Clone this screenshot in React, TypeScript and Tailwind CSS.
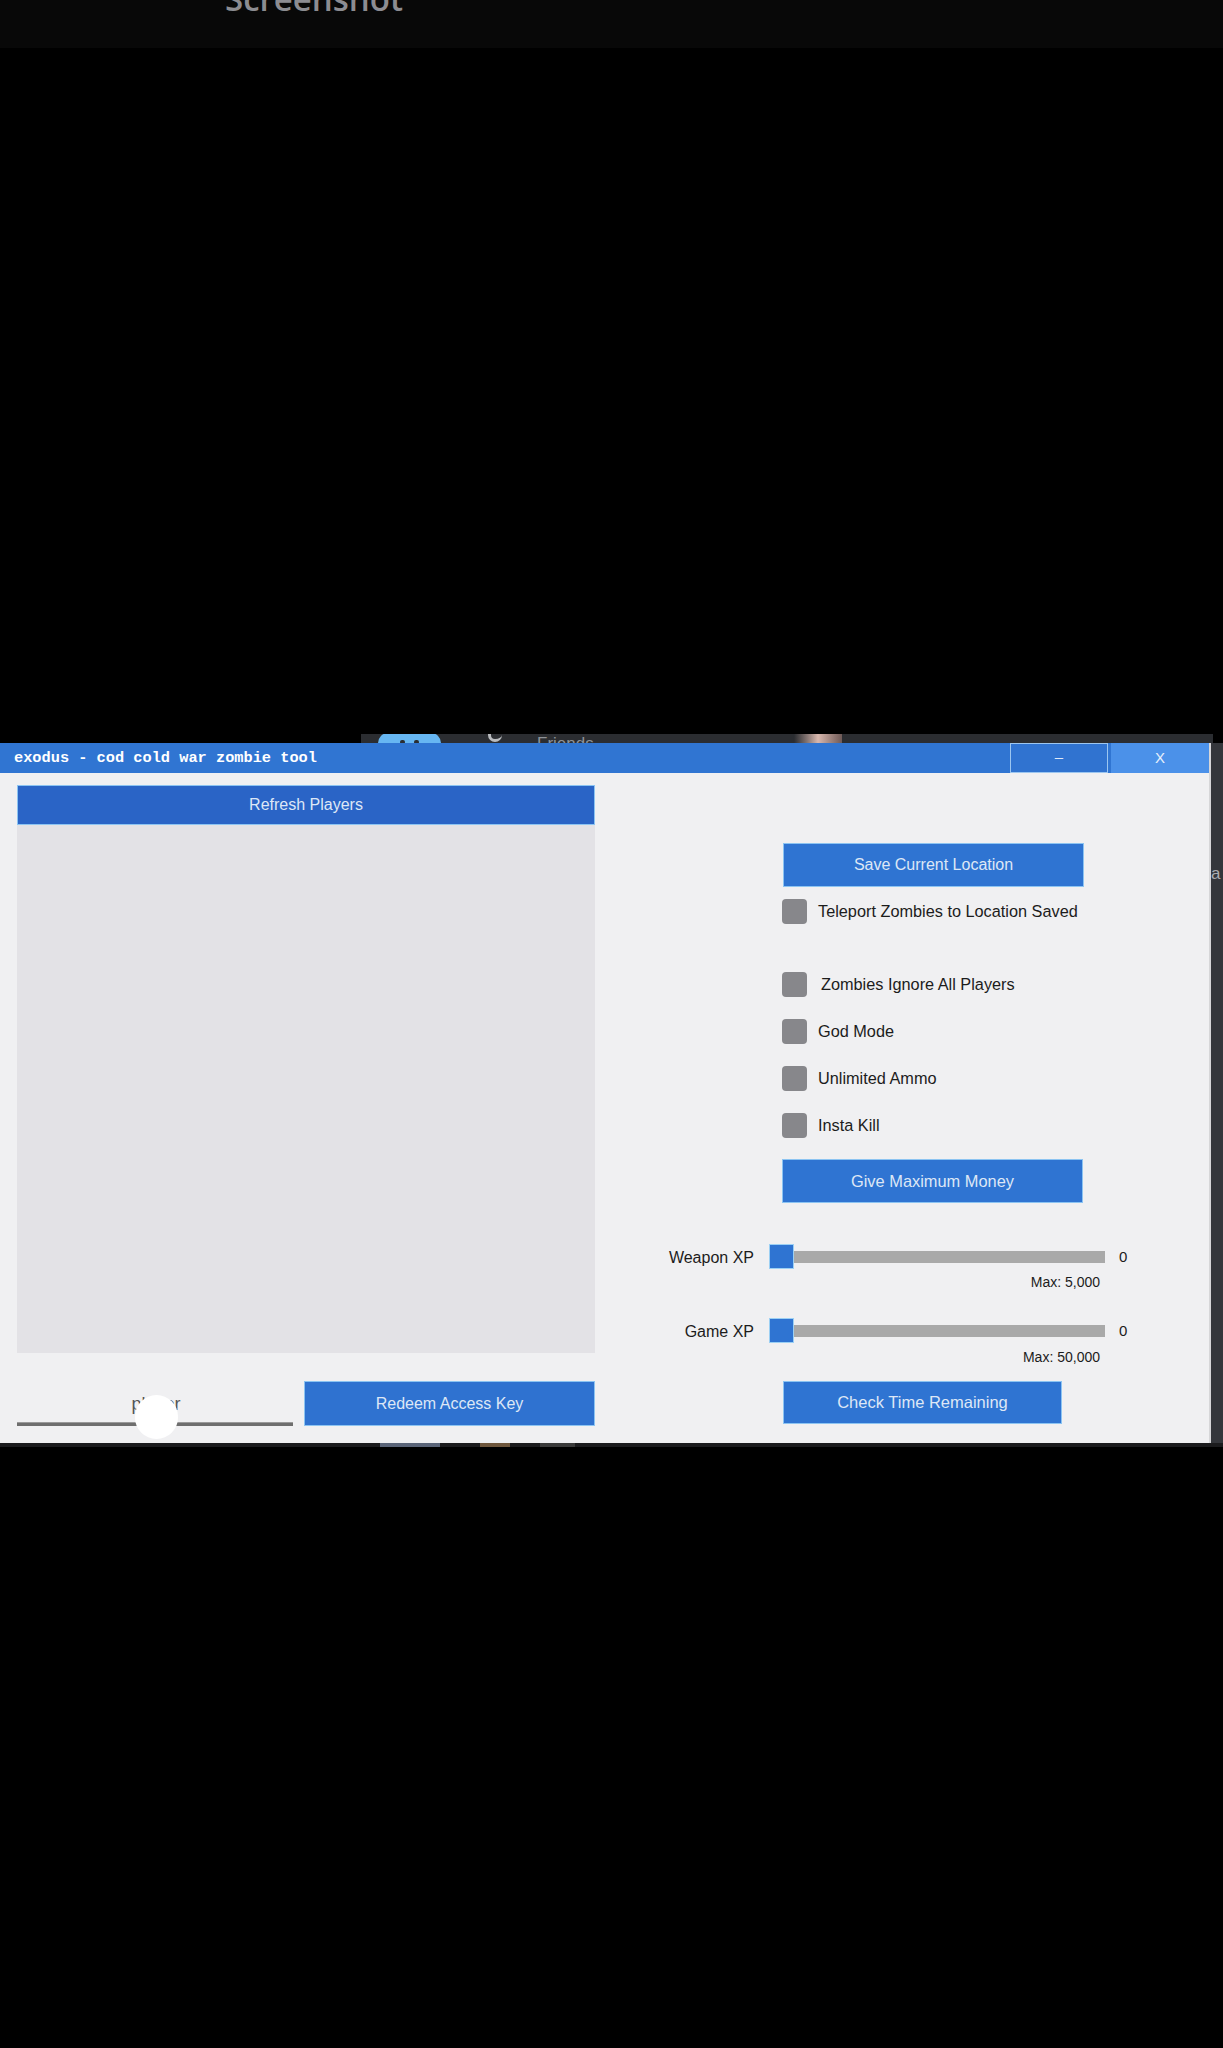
// exodus tool window, as seen in a phone screenshot
const sans = { fontFamily: '"Liberation Sans", Arial, sans-serif' };
const mono = { fontFamily: '"Liberation Mono", "Courier New", monospace' };

function BlueButton({ label, className }: { label: string; className: string }) {
  return (
    <div
      className={`flex items-center justify-center border border-[#8cc4f2] text-[#dde7f6] ${className}`}
      style={sans}
    >
      {label}
    </div>
  );
}

function Check({ label, shift = false }: { label: string; shift?: boolean }) {
  return (
    <div className="flex h-[25px] items-center">
      <div className="h-[25px] w-[25px] rounded-[4px] bg-[#87878b]" />
      <span
        className={`text-[16.3px] text-[#1c1c1c] ${shift ? "ml-[14px]" : "ml-[11px]"}`}
        style={sans}
      >
        {label}
      </span>
    </div>
  );
}

function XpSlider({ label }: { label: string }) {
  return (
    <div className="flex h-[25px] items-center">
      <div className="w-[134px] pt-[2px] text-right text-[16px] text-[#1c1c1c]" style={sans}>
        {label}
      </div>
      <div className="ml-[15px] h-[25px] w-[25px] border border-[#9cd0f4] bg-[#2f74d2]" />
      <div className="h-[12px] w-[311px] bg-[#a9a9a9]" />
      <div className="ml-[14px] pt-[2px] text-[15px] text-[#1c1c1c]" style={sans}>
        0
      </div>
    </div>
  );
}

export default function App() {
  return (
    <div className="flex min-h-[2048px] w-[1223px] flex-col bg-black">
      {/* status header of the screenshot app */}
      <div className="h-[48px] overflow-hidden bg-[#080808] pl-[225px]">
        <div
          className="mt-[-21px] text-[33px] font-semibold leading-[40px] text-[#8c8c91]"
          style={{ fontFamily: '"Open Sans", "Noto Sans", sans-serif' }}
        >
          Screenshot
        </div>
      </div>

      <div className="h-[686px]" />

      {/* bit of the app behind the window */}
      <div className="ml-[361px] flex h-[9px] w-[852px] items-start overflow-hidden bg-[#2b2d31]">
        <div className="relative ml-[17px] mt-[-1px] h-[20px] w-[63px] rounded-t-[10px] bg-[#66b6f2]">
          <div className="absolute left-[22px] top-[7px] h-[4px] w-[5px] rounded-full bg-[#2b2d31]" />
          <div className="absolute left-[36px] top-[7px] h-[4px] w-[5px] rounded-full bg-[#2b2d31]" />
        </div>
        <div className="ml-[47px] mt-[-6px] h-[14px] w-[14px] rounded-full border-b-[3px] border-l-[3px] border-[#b9bbbe]" />
        <div className="ml-[35px] mt-[1px] text-[17px] leading-[17px] text-[#8e9297]" style={sans}>
          Friends
        </div>
        <div className="ml-[200px] h-[9px] w-[48px] bg-gradient-to-r from-[#2b2d31] via-[#d8b7ad] to-[#6f5a57]" />
      </div>

      <div className="flex h-[700px]">
        {/* window */}
        <div className="flex w-[1211px] flex-col border-r-[2px] border-[#d6d6d8]">
          <div className="flex h-[30px] bg-[#3075d2]">
            <div
              className="flex flex-1 items-center pl-[14px] text-[15.3px] font-bold text-white"
              style={mono}
            >
              exodus - cod cold war zombie tool
            </div>
            <div className="flex w-[98px] items-center justify-center border border-[#9cc6f0] bg-[#3073d0] pb-[2px] text-[15px] text-[#dfe9f8]" style={sans}>
              –
            </div>
            <div className="ml-[3px] flex w-[98px] items-center justify-center bg-[#4b91e9] text-[15px] text-[#e6effb]" style={sans}>
              X
            </div>
          </div>

          <div className="flex flex-1 bg-[#f0f0f2]">
            {/* left column */}
            <div className="ml-[17px] flex w-[578px] flex-col pt-[12px]">
              <BlueButton label="Refresh Players" className="h-[40px] bg-[#2a64c6] text-[16px]" />
              <div className="h-[528px] bg-[#e3e2e6]" />
              <div className="mt-[28px] flex">
                <div className="relative h-[45px] w-[276px]">
                  <div className="pl-[2px] pt-[13px] text-center text-[18px] leading-[20px] text-[#555]" style={sans}>
                    player
                  </div>
                  <div className="mt-[8px] h-[4px] border-t border-[#9a9a9a] bg-[#6e6e6e]" />
                  <div className="absolute left-[118px] top-[14px] h-[44px] w-[43px] rounded-full bg-white" />
                </div>
                <BlueButton label="Redeem Access Key" className="ml-[11px] h-[45px] w-[291px] bg-[#2f72d0] text-[16px]" />
              </div>
            </div>

            {/* right column */}
            <div className="ml-[25px] flex flex-1 flex-col">
              <BlueButton label="Save Current Location" className="ml-[163px] mt-[70px] h-[44px] w-[301px] bg-[#2f74d2] text-[16px]" />
              <div className="ml-[162px] mt-[12px]">
                <Check label="Teleport Zombies to Location Saved" />
              </div>
              <div className="ml-[162px] mt-[48px]">
                <Check label="Zombies Ignore All Players" shift />
              </div>
              <div className="ml-[162px] mt-[22px]">
                <Check label="God Mode" />
              </div>
              <div className="ml-[162px] mt-[22px]">
                <Check label="Unlimited Ammo" />
              </div>
              <div className="ml-[162px] mt-[22px]">
                <Check label="Insta Kill" />
              </div>
              <BlueButton label="Give Maximum Money" className="ml-[162px] mt-[21px] h-[44px] w-[301px] bg-[#2f74d2] text-[16.4px]" />

              <div className="mt-[41px]">
                <XpSlider label="Weapon XP" />
              </div>
              <div className="mt-[5px] w-[480px] text-right text-[14px] leading-[16px] text-[#1c1c1c]" style={sans}>
                Max: 5,000
              </div>
              <div className="mt-[28px]">
                <XpSlider label="Game XP" />
              </div>
              <div className="mt-[6px] w-[480px] text-right text-[14px] leading-[16px] text-[#1c1c1c]" style={sans}>
                Max: 50,000
              </div>
              <BlueButton label="Check Time Remaining" className="ml-[163px] mt-[16px] h-[43px] w-[279px] bg-[#2f74d2] text-[16.5px]" />
            </div>
          </div>
        </div>

        {/* edge of the app behind, on the right */}
        <div className="flex-1 bg-[#34363b] pt-[118px] text-[17px] text-[#a9abb0]" style={sans}>
          a
        </div>
      </div>

      <div className="flex h-[4px] bg-[#1b1b1d]">
        <div className="ml-[380px] w-[60px] bg-[#5a6478]" />
        <div className="ml-[40px] w-[30px] bg-[#6e563c]" />
        <div className="ml-[30px] w-[35px] bg-[#3a3a3a]" />
      </div>
    </div>
  );
}
